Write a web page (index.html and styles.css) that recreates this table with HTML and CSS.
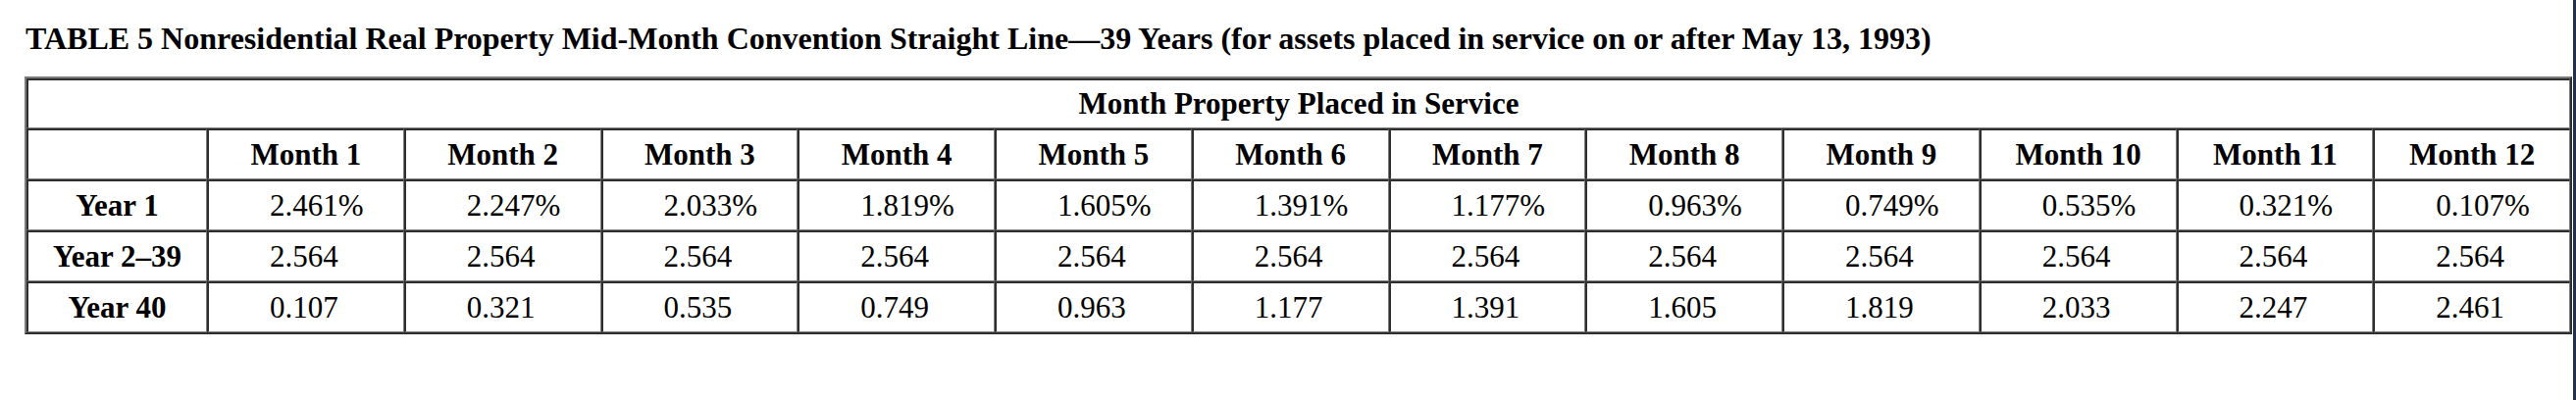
FILE: index.html
```html
<!DOCTYPE html>
<html lang="en">
<head>
<meta charset="utf-8">
<title>TABLE 5 Nonresidential Real Property</title>
<link rel="stylesheet" href="styles.css">
</head>
<body>
<div class="page">
  <h1 class="title">TABLE 5 Nonresidential Real Property Mid-Month Convention Straight Line—39 Years (for assets placed in service on or after May 13, 1993)</h1>
  <table class="rates">
    <colgroup>
      <col class="col-year">
      <col span="12">
    </colgroup>
    <thead>
      <tr class="row-group"><th colspan="13" class="group">Month Property Placed in Service</th></tr>
      <tr>
        <th class="corner"></th>
        <th>Month 1</th><th>Month 2</th><th>Month 3</th><th>Month 4</th><th>Month 5</th><th>Month 6</th>
        <th>Month 7</th><th>Month 8</th><th>Month 9</th><th>Month 10</th><th>Month 11</th><th>Month 12</th>
      </tr>
    </thead>
    <tbody>
      <tr>
        <th class="year">Year 1</th>
        <td>2.461%</td><td>2.247%</td><td>2.033%</td><td>1.819%</td><td>1.605%</td><td>1.391%</td>
        <td>1.177%</td><td>0.963%</td><td>0.749%</td><td>0.535%</td><td>0.321%</td><td>0.107%</td>
      </tr>
      <tr>
        <th class="year">Year 2–39</th>
        <td>2.564</td><td>2.564</td><td>2.564</td><td>2.564</td><td>2.564</td><td>2.564</td>
        <td>2.564</td><td>2.564</td><td>2.564</td><td>2.564</td><td>2.564</td><td>2.564</td>
      </tr>
      <tr>
        <th class="year">Year 40</th>
        <td>0.107</td><td>0.321</td><td>0.535</td><td>0.749</td><td>0.963</td><td>1.177</td>
        <td>1.391</td><td>1.605</td><td>1.819</td><td>2.033</td><td>2.247</td><td>2.461</td>
      </tr>
    </tbody>
  </table>
</div>
</body>
</html>
```

FILE: styles.css
```css
html, body {
  margin: 0;
  padding: 0;
  background: #ffffff;
}

.page {
  min-height: 408px;
  box-sizing: border-box;
  border-right: 3px solid #24304a;
  padding: 20px 1px 0 25px;
  font-family: "Liberation Serif", "Times New Roman", serif;
  color: #000000;
}

.title {
  margin: 0 0 20px 1px;
  font-size: 32px;
  line-height: 38px;
  font-weight: bold;
  white-space: nowrap;
}

.rates {
  border-collapse: separate;
  border-spacing: 0;
  table-layout: fixed;
  width: 2597px;
  border-style: solid;
  border-width: 2px;
  border-color: #7b7b7b #2e2e2e #2e2e2e #7b7b7b;
}

.col-year {
  width: 184px;
}

.rates tr {
  height: 52px;
}

.rates .row-group {
  height: 51px;
}

.rates th,
.rates td {
  border-style: solid;
  border-width: 2px 1px 1px 2px;
  border-color: #2e2e2e #7b7b7b #7b7b7b #2e2e2e;
  padding: 0;
  vertical-align: middle;
  white-space: nowrap;
}

.rates th {
  font-size: 31px;
  font-weight: bold;
  text-align: center;
}

.rates td {
  font-size: 31px;
  font-weight: normal;
  text-align: left;
  padding-left: 62px;
}
```
